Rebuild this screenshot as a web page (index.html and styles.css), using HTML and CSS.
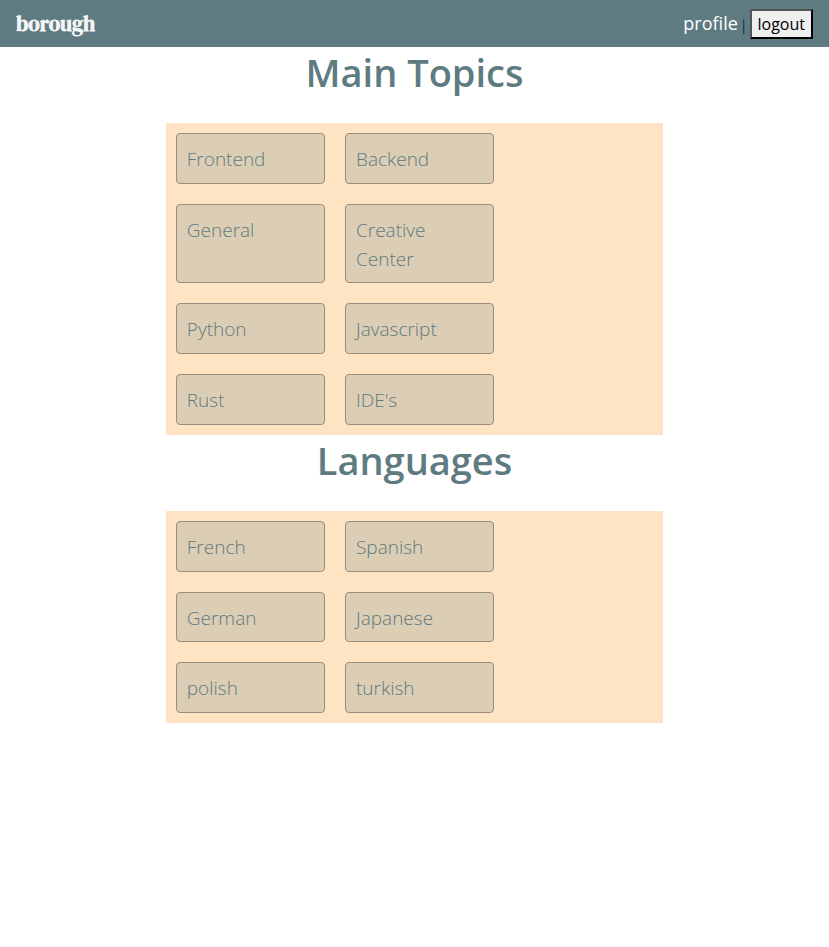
FILE: index.html
```html
<!DOCTYPE html>
<html lang="en">
<head>
<meta charset="utf-8">
<title>borough</title>
<link rel="stylesheet" href="styles.css">
</head>
<body>
<header class="navbar">
  <a class="brand" href="#">borough</a>
  <nav class="account">
    <a class="profile" href="#">profile</a>
    <span class="divider">|</span>
    <button class="logout" type="button">logout</button>
  </nav>
</header>
<main>
  <section>
    <h1 class="title">Main Topics</h1>
    <div class="topics">
      <a class="topic" href="#">Frontend</a>
      <a class="topic" href="#">Backend</a>
      <a class="topic" href="#">General</a>
      <a class="topic" href="#">Creative Center</a>
      <a class="topic" href="#">Python</a>
      <a class="topic" href="#">Javascript</a>
      <a class="topic" href="#">Rust</a>
      <a class="topic" href="#">IDE's</a>
    </div>
  </section>
  <section>
    <h1 class="title">Languages</h1>
    <div class="topics">
      <a class="topic" href="#">French</a>
      <a class="topic" href="#">Spanish</a>
      <a class="topic" href="#">German</a>
      <a class="topic" href="#">Japanese</a>
      <a class="topic" href="#">polish</a>
      <a class="topic" href="#">turkish</a>
    </div>
  </section>
</main>
</body>
</html>
```
FILE: styles.css
```css
* {
  box-sizing: border-box;
}

body {
  margin: 0;
  background: #fff;
  color: #212529;
  font-family: "Segoe UI", "Open Sans", sans-serif;
  font-size: 16px;
  line-height: 24px;
}

a {
  text-decoration: none;
}

.navbar {
  display: flex;
  align-items: center;
  justify-content: space-between;
  height: 47px;
  padding: 0 16px;
  background: #5e7b81;
}

.brand {
  color: #f5f5f5;
  font-family: "DM Serif Display", "Liberation Serif", serif;
  font-size: 21px;
  font-weight: 700;
}

.account {
  display: flex;
  align-items: baseline;
  gap: 2px;
}

.profile {
  color: #fff;
  font-size: 18px;
}

.divider {
  color: #1f2350;
  font-size: 14px;
}

.logout {
  height: 30px;
  padding: 0 6px;
  border: 2px outset #000;
  background: #efefef;
  color: #000;
  font-family: inherit;
  font-size: 16px;
  font-weight: 400;
}

.title {
  margin: 0;
  padding-bottom: 26px;
  color: #5e7b81;
  font-size: 38px;
  font-weight: 600;
  line-height: 50px;
  text-align: center;
}

.topics {
  display: flex;
  flex-wrap: wrap;
  width: 60%;
  margin: 0 auto;
  background: #ffe4c4;
}

.topic {
  width: 30%;
  margin: 10px;
  padding: 11px 10px 9px;
  border: 1px solid #988d7e;
  border-radius: 4px;
  background: #dccdb5;
  color: #5e7b81;
  font-size: 19px;
  font-weight: 300;
  line-height: 1.515;
}
```
